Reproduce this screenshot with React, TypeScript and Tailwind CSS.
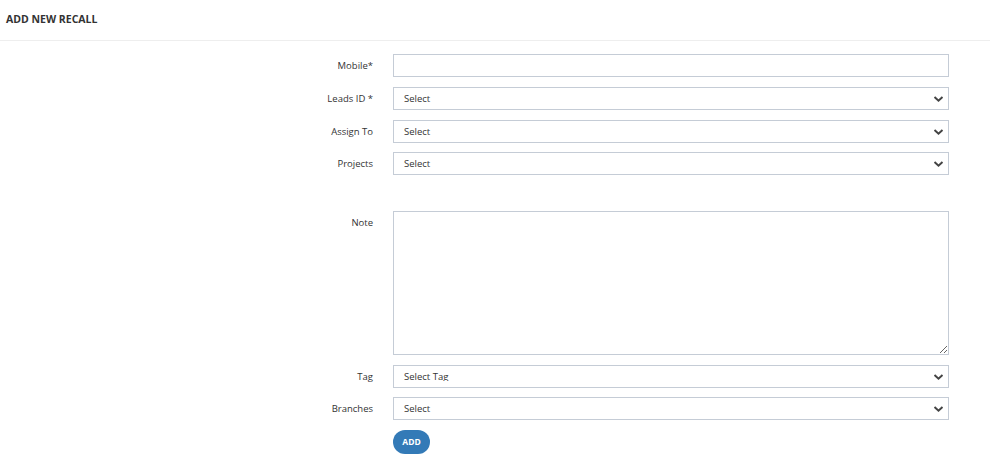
import { ReactNode } from "react";

const font = { fontFamily: '"Open Sans", "Noto Sans", sans-serif' };

function Chevron() {
  return (
    <svg
      className="pointer-events-none absolute right-[5px] top-1/2 -translate-y-1/2"
      width="11"
      height="7"
      viewBox="0 0 11 7"
      fill="none"
    >
      <path d="M1.5 1.5 L5.5 5.2 L9.5 1.5" stroke="#444" strokeWidth="2" />
    </svg>
  );
}

function Row({ label, children, top }: { label: string; children: ReactNode; top?: boolean }) {
  return (
    <div
      className={`grid grid-cols-[373px_556px] gap-x-[20px] ${top ? "items-start" : "h-[23px] items-center"}`}
    >
      <span className={`block text-right text-[9.5px] leading-none text-[#333] ${top ? "pt-[7px]" : ""}`}>
        {label}
      </span>
      {children}
    </div>
  );
}

function SelectBox({ placeholder }: { placeholder: string }) {
  return (
    <div className="relative h-[23px]">
      <select
        defaultValue=""
        className="block h-[23px] w-full appearance-none border border-[#c5ccd6] bg-white py-0 pl-[10px] text-[9.5px] leading-none text-[#333] outline-none"
        style={font}
      >
        <option value="">{placeholder}</option>
      </select>
      <Chevron />
    </div>
  );
}

export default function App() {
  return (
    <div className="min-h-[471px] w-full bg-white" style={font}>
      <div className="flex h-[41px] items-center border-b border-[#eeeeee] px-[6px]">
        <h1 className="text-[10.5px] font-bold text-[#333]">ADD NEW RECALL</h1>
      </div>

      <form className="flex flex-col gap-[10px] pt-[13px]">
        <Row label="Mobile*">
          <input
            className="block h-[23px] w-full border border-[#c5ccd6] bg-white px-[10px] text-[9.5px] outline-none"
            style={font}
          />
        </Row>
        <Row label="Leads ID *">
          <SelectBox placeholder="Select" />
        </Row>
        <Row label="Assign To">
          <SelectBox placeholder="Select" />
        </Row>
        <div className="-mt-[1px]">
          <Row label="Projects">
            <SelectBox placeholder="Select" />
          </Row>
        </div>

        <div className="mt-[26px]">
          <Row label="Note" top>
            <textarea
              className="block h-[144px] w-full border border-[#c5ccd6] bg-white px-[10px] text-[9.5px] outline-none"
              style={font}
            />
          </Row>
        </div>

        <Row label="Tag">
          <SelectBox placeholder="Select Tag" />
        </Row>
        <div className="-mt-[1px]">
          <Row label="Branches">
            <SelectBox placeholder="Select" />
          </Row>
        </div>

        <div className="grid grid-cols-[373px_556px] gap-x-[20px]">
          <div />
          <div>
            <button
              type="button"
              className="block h-[24px] w-[37px] rounded-full bg-[#337ab7] text-[8.5px] font-bold text-white"
            >
              ADD
            </button>
          </div>
        </div>
      </form>
    </div>
  );
}
